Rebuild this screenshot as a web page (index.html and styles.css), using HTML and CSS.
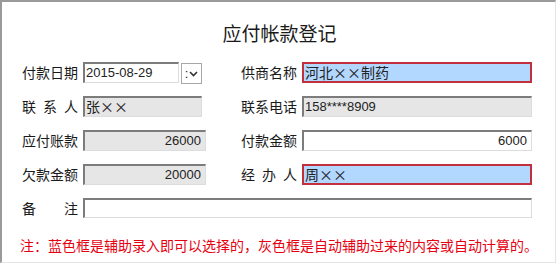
FILE: index.html
```html
<!DOCTYPE html>
<html lang="zh-CN">
<head>
    <meta charset="UTF-8">
    <title>应付帐款登记</title>
    <link rel="stylesheet" href="styles.css">
</head>
<body>
    <div class="janela">
        <h1 class="titulo">应付帐款登记</h1>

        <div class="form">
            <div class="campo">
                <div class="rotulo"><span>付款日期</span></div>
                <div class="caixa data">2015-08-29</div>
                <div class="seletor">:<svg width="9" height="6" viewBox="0 0 9 6"><path d="M1 1 L4.5 4.5 L8 1" fill="none" stroke="#333" stroke-width="1.6"/></svg></div>
            </div>
            <div class="campo">
                <div class="rotulo"><span>供商名称</span></div>
                <div class="caixa azul">河北××制药</div>
            </div>

            <div class="campo">
                <div class="rotulo"><span>联</span><span>系</span><span>人</span></div>
                <div class="caixa cinza curta">张××</div>
            </div>
            <div class="campo">
                <div class="rotulo"><span>联系电话</span></div>
                <div class="caixa cinza num">158****8909</div>
            </div>

            <div class="campo">
                <div class="rotulo"><span>应付账款</span></div>
                <div class="caixa cinza num direita">26000</div>
            </div>
            <div class="campo">
                <div class="rotulo"><span>付款金额</span></div>
                <div class="caixa num direita">6000</div>
            </div>

            <div class="campo">
                <div class="rotulo"><span>欠款金额</span></div>
                <div class="caixa cinza num direita">20000</div>
            </div>
            <div class="campo">
                <div class="rotulo"><span>经</span><span>办</span><span>人</span></div>
                <div class="caixa azul">周××</div>
            </div>

            <div class="campo inteiro">
                <div class="rotulo"><span>备</span><span>注</span></div>
                <div class="caixa"></div>
            </div>
        </div>

        <p class="nota">注：蓝色框是辅助录入即可以选择的，灰色框是自动辅助过来的内容或自动计算的。</p>
    </div>
</body>
</html>
```

FILE: styles.css
```css
body {
    margin: 0;
    padding: 0;
    background-color: #fff;
    font-family: "Noto Sans CJK SC", "Liberation Sans", sans-serif;
    color: #222;
}
.janela {
    width: 553px;
    height: 260px;
    border-style: solid;
    border-width: 2px 1px 1px 2px;
    border-color: #9a9a9a #e4e4e4 #e4e4e4 #9a9a9a;
    position: relative;
}
.titulo {
    margin: 0;
    padding-top: 19px;
    height: 24px;
    line-height: 24px;
    font-size: 19px;
    font-weight: normal;
    text-align: center;
    color: #1a1a1a;
    padding-left: 2px;
}
.form {
    display: grid;
    grid-template-columns: 184px 291px;
    column-gap: 35px;
    row-gap: 13px;
    padding: 17px 0 0 20px;
}
.campo {
    display: flex;
    align-items: center;
    height: 21px;
}
.inteiro {
    grid-column: 1 / 3;
    height: 20px;
}
.rotulo {
    width: 56px;
    margin-right: 5px;
    display: flex;
    justify-content: space-between;
    font-size: 14px;
    line-height: 21px;
    color: #1a1a1a;
    flex-shrink: 0;
}
.caixa {
    flex: 1;
    height: 100%;
    box-sizing: border-box;
    border-style: solid;
    border-width: 2px 1px 1px 2px;
    border-color: #7c7c7c #dcdcdc #dcdcdc #7c7c7c;
    background-color: #fff;
    font-size: 14px;
    line-height: 17px;
    padding: 0 4px 0 1px;
    white-space: nowrap;
    overflow: hidden;
}
.num {
    font-family: "Liberation Sans", sans-serif;
    font-size: 13px;
    color: #222;
}
.direita {
    text-align: right;
}
.data {
    flex: none;
    width: 96px;
    margin-right: 2px;
    font-family: "Liberation Sans", sans-serif;
    font-size: 13px;
}
.seletor {
    width: 21px;
    height: 21px;
    box-sizing: border-box;
    border: 1px solid #a8a8a8;
    display: flex;
    align-items: center;
    justify-content: center;
    gap: 1px;
    font-family: "Liberation Sans", sans-serif;
    font-size: 13px;
    line-height: 19px;
    margin-top: 2px;
}
.curta {
    flex: none;
    width: 119px;
}
.cinza {
    background-color: #e6e6e6;
}
.azul {
    background-color: #b3d8ff;
    border: 2px solid #c2303c;
    line-height: 17px;
}
.nota {
    margin: 17px 0 0 18px;
    font-size: 14px;
    line-height: 20px;
    color: #e60012;
    white-space: nowrap;
}
```
